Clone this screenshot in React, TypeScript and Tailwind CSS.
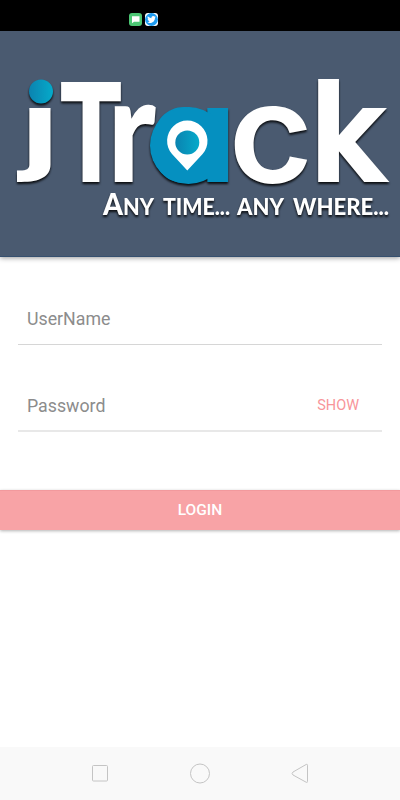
import React from "react";

function StatusBar() {
  return (
    <div className="flex h-[31px] items-end gap-[3px] bg-black pb-[5px] pl-[129px]">
      <svg width="13" height="13" viewBox="0 0 13 13">
        <rect width="13" height="13" rx="3" fill="#4cc774" />
        <path d="M3 3.2h7.5v5.6H5L3 10.3z" fill="#fff" />
      </svg>
      <svg width="13" height="13" viewBox="0 0 13 13">
        <rect width="13" height="13" rx="3" fill="#fff" />
        <circle cx="6.5" cy="6.5" r="6.4" fill="#1d9bf0" />
        <g transform="translate(2.2 2.2) scale(0.36)">
          <path
            fill="#fff"
            d="M23.95 4.57a10 10 0 0 1-2.82.77 4.96 4.96 0 0 0 2.16-2.72c-.95.55-2 .96-3.13 1.18a4.92 4.92 0 0 0-8.38 4.48A13.98 13.98 0 0 1 1.64 3.16a4.92 4.92 0 0 0 1.52 6.57 4.9 4.9 0 0 1-2.23-.61v.06a4.92 4.92 0 0 0 3.95 4.83 5 5 0 0 1-2.21.08 4.94 4.94 0 0 0 4.6 3.42A9.87 9.87 0 0 1 0 19.54a13.99 13.99 0 0 0 7.55 2.21c9.05 0 14-7.5 14-13.98 0-.21 0-.42-.02-.63a9.94 9.94 0 0 0 2.42-2.57z"
          />
        </g>
      </svg>
    </div>
  );
}

function Header() {
  return (
    <header className="h-[226px] border-b border-[#36506f] bg-[#4a5a70] shadow-[0_1px_5px_rgba(0,0,0,0.4)]">
      <svg width="400" height="225" viewBox="0 31 400 225" className="block">
        <defs>
          <linearGradient id="dot" x1="0" y1="0" x2="1" y2="0">
            <stop offset="0" stopColor="#0b83b0" />
            <stop offset="1" stopColor="#05aaca" />
          </linearGradient>
          <clipPath id="stem">
            <rect x="0" y="107.500" width="60" height="80" />
          </clipPath>
        </defs>
        <g
          className="font-['Inter',sans-serif] font-bold drop-shadow-[0_2px_1px_rgba(0,0,0,0.85)]"
          fill="#fff"
        >
          <g clipPath="url(#stem)">
            <text transform="translate(20.500 161.500) scale(1.450 1)" fontSize="99" className="font-bold">j</text>
          </g>
          <text transform="translate(58 182)" fontSize="137.5" textLength="66" lengthAdjust="spacingAndGlyphs" className="font-extrabold">T</text>
          <text transform="translate(107.500 182) scale(0.88 1)" fontSize="146" className="font-['Lato',sans-serif] font-black">r</text>
          <text transform="translate(147 182) scale(1.05 1)" fontSize="136" fill="#0590c0" className="[font-feature-settings:'cv11']">a</text>
          <text transform="translate(228.500 182) scale(1.060 1)" fontSize="137" className="font-semibold">c</text>
          <text transform="translate(308.200 182) scale(0.875 1)" fontSize="135.5" className="font-['DejaVu_Sans',sans-serif]">k</text>
          <circle cx="41" cy="91.5" r="12" fill="url(#dot)" />
          <circle cx="188.500" cy="145.500" r="38.500" fill="#0590c0" />
        </g>
        <path d="M187.3 170.5 L172 154 A20.2 20.2 0 1 1 202.600 154 Z" fill="#fff" />
        <circle cx="187.3" cy="142.5" r="12" fill="url(#dot)" />
        <g
          className="font-['Lato',sans-serif] font-black drop-shadow-[0_2px_1px_rgba(0,0,0,0.85)]"
          fill="#fff"
          fontSize="22.5"
        >
          <text x="103" y="215" fontSize="30" textLength="20" lengthAdjust="spacingAndGlyphs">A</text>
          <text x="123" y="215" textLength="31" lengthAdjust="spacingAndGlyphs">NY</text>
          <text x="163" y="215" textLength="67" lengthAdjust="spacingAndGlyphs">TIME...</text>
          <text x="237" y="215" textLength="47" lengthAdjust="spacingAndGlyphs">ANY</text>
          <text x="293" y="215" textLength="96" lengthAdjust="spacingAndGlyphs">WHERE...</text>
        </g>
      </svg>
    </header>
  );
}

function LoginForm() {
  return (
    <main className="flex h-[490px] flex-col">
      <div className="mx-[18px] mt-[37px] flex h-[51px] items-center border-b border-[#d6d6d6] pl-[9px] text-[17.75px] text-[#8c8c8c]">
        <span>UserName</span>
      </div>
      <div className="mx-[18px] mt-[35px] flex h-[52px] items-center justify-between border-b-2 border-[#e8e8e8] pt-[2px] pr-[23px] pl-[9px] text-[17.75px] text-[#8c8c8c]">
        <span>Password</span>
        <button className="text-[14.5px] text-[#f8959a]">SHOW</button>
      </div>
      <button className="mt-[58px] h-[40px] border-t border-[#f2999d] bg-[#f8a3a6] text-[15.5px] font-medium text-white shadow-[0_1px_3px_rgba(0,0,0,0.3)]">
        LOGIN
      </button>
    </main>
  );
}

function NavigationBar() {
  return (
    <nav className="h-[53px] bg-[#f9f9f9]">
      <svg width="400" height="53" fill="none" stroke="#c4c4c4" strokeWidth="1">
        <rect x="92.500" y="18.500" width="15" height="15.500" rx="1" />
        <circle cx="200" cy="26.500" r="9.500" />
        <path d="M306.300 17.400 L293 25 Q291.200 26.500 293 28 L306.300 35.300 Q307.500 35.800 307.500 34.500 V18.200 Q307.500 17 306.300 17.400Z" />
      </svg>
    </nav>
  );
}

export default function App() {
  return (
    <div className="flex h-[800px] w-[400px] flex-col overflow-hidden bg-white font-['Roboto',sans-serif]">
      <StatusBar />
      <Header />
      <LoginForm />
      <NavigationBar />
    </div>
  );
}
